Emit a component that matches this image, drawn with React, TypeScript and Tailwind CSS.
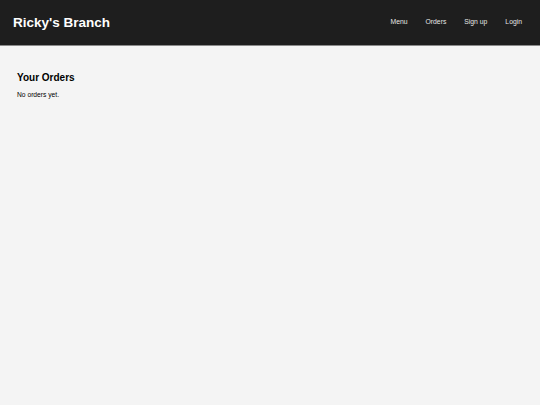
import React from 'react';

const NAV_LINKS = ['Menu', 'Orders', 'Sign up', 'Login'];

export default function App() {
  return (
    <div className="min-h-screen bg-[#f4f4f4] font-['Liberation_Sans',Arial,sans-serif] text-black">
      {/* Header */}
      <header className="flex h-[46px] items-center justify-between border-b border-[#8a8a8a] bg-[#1e1e1e] pl-[13px] pr-[18px]">
        <h1 className="text-[13.5px] font-bold leading-none text-white">Ricky's Branch</h1>
        <nav className="flex items-center gap-[18px]">
          {NAV_LINKS.map((link) => (
            <a key={link} href="#" className="text-[6.8px] leading-none text-[#e6e6e6]">
              {link}
            </a>
          ))}
        </nav>
      </header>

      {/* Content */}
      <main className="px-[17px] pt-[27px]">
        <h2 className="text-[10px] font-bold leading-none">Your Orders</h2>
        <p className="mt-[9px] text-[6.7px] leading-none">No orders yet.</p>
      </main>
    </div>
  );
}
